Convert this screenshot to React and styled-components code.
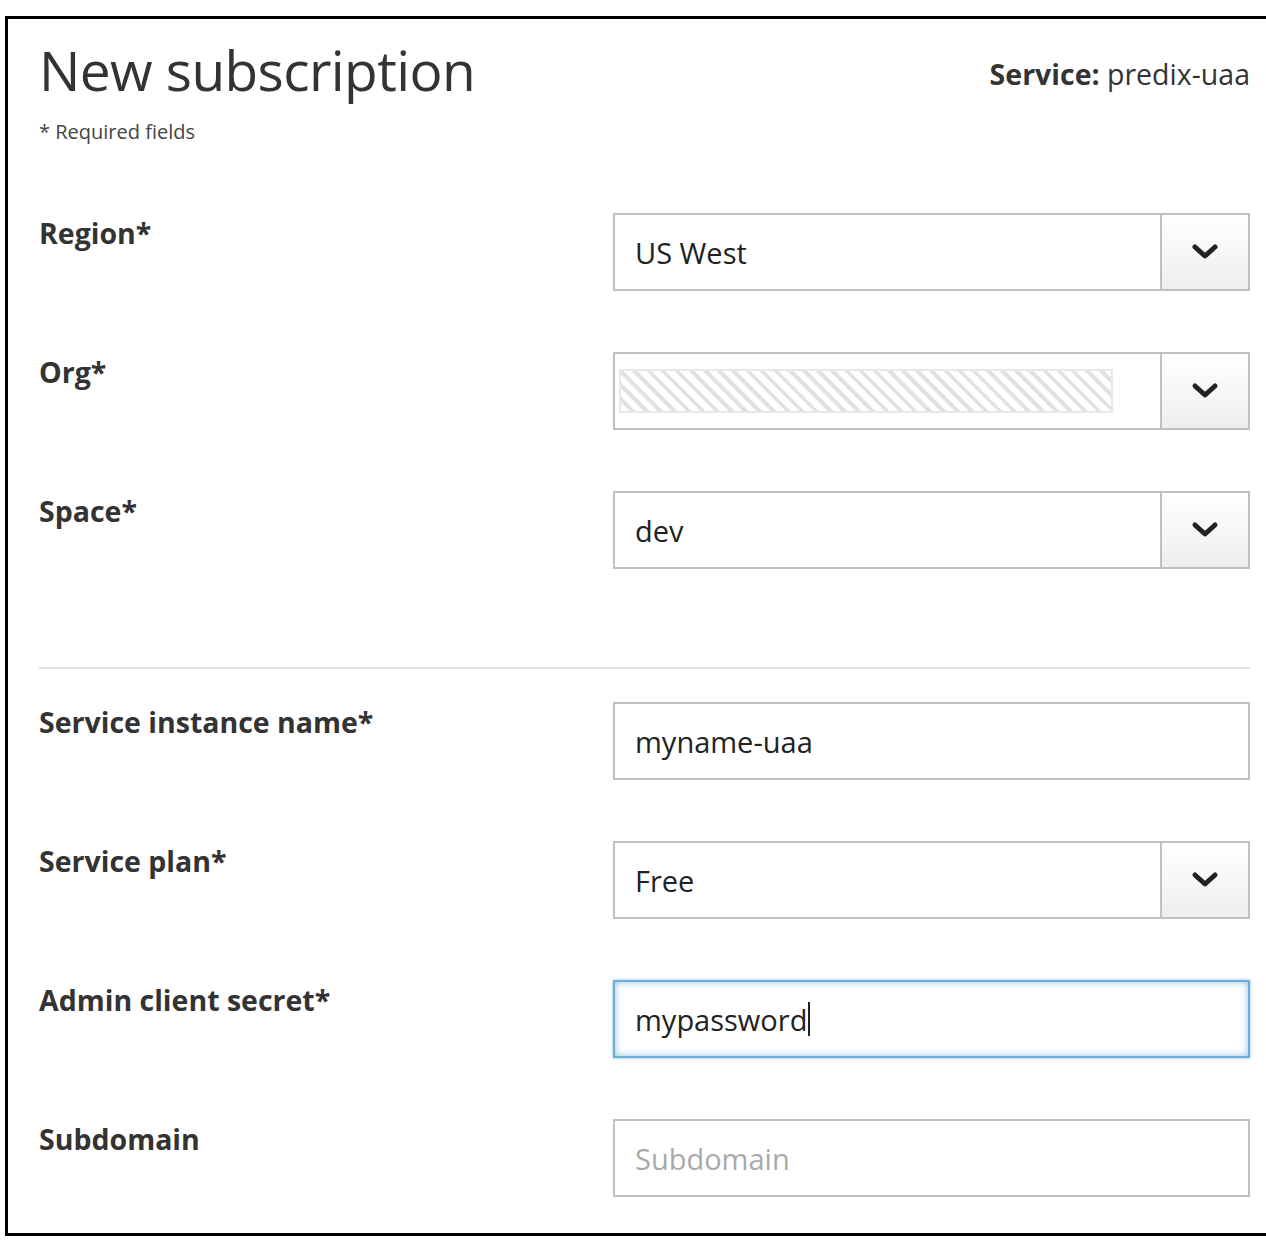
import styled, { createGlobalStyle } from 'styled-components';

const GlobalStyle = createGlobalStyle`
  html, body {
    margin: 0;
    padding: 0;
    background: #fff;
    overflow: hidden;
  }
  body {
    font-family: 'Open Sans', 'Noto Sans', sans-serif;
    color: #333;
  }
`

function Chevron() {
  return (
    <svg width="30" height="20" viewBox="0 0 30 20">
      <polyline points="5,5 15,14 25,5" fill="none" stroke="#222" strokeWidth="5" strokeLinecap="round" strokeLinejoin="round" />
    </svg>
  )
}

function SelectRow({ label, value, hatched }) {
  return (
    <Row>
      <Label>{label}</Label>
      <Field>
        <Value>{hatched ? <Hatch /> : value}</Value>
        <Toggle><Chevron /></Toggle>
      </Field>
    </Row>
  )
}

export default function App() {
  return (
    <>
      <GlobalStyle />
      <Frame>
        <Header>
          <div>
            <Title>New subscription</Title>
            <Required>* Required fields</Required>
          </div>
          <Service><b>Service:</b> predix-uaa</Service>
        </Header>

        <Group>
          <SelectRow label="Region*" value="US West" />
          <SelectRow label="Org*" hatched />
          <SelectRow label="Space*" value="dev" />
        </Group>

        <Divider />

        <Group>
          <Row>
            <Label>Service instance name*</Label>
            <Field><Value>myname-uaa</Value></Field>
          </Row>
          <SelectRow label="Service plan*" value="Free" />
          <Row>
            <Label>Admin client secret*</Label>
            <Field $focused><Value>mypassword<Caret /></Value></Field>
          </Row>
          <Row>
            <Label>Subdomain</Label>
            <Field><Value $placeholder>Subdomain</Value></Field>
          </Row>
        </Group>
      </Frame>
    </>
  )
}

const Frame = styled.div`
  margin: 16px 0 0 5px;
  border: 3px solid #000;
  border-right: none;
  height: 1220px;
  box-sizing: border-box;
  padding: 16px 16px 0 31px;
`

const Header = styled.div`
  display: flex;
  justify-content: space-between;
  align-items: flex-start;
`

const Title = styled.h1`
  margin: 0;
  font-size: 55px;
  font-weight: 400;
  line-height: 70px;
  letter-spacing: -0.6px;
  color: #333;
`

const Required = styled.div`
  font-size: 20px;
  line-height: 26px;
  margin-top: 14px;
  color: #444;
`

const Service = styled.div`
  font-size: 28.5px;
  line-height: 36px;
  margin-top: 21px;
  color: #333;
  b {
    font-weight: 700;
  }
`

const Group = styled.div`
  display: flex;
  flex-direction: column;
  gap: 61px;
  margin-top: 68px;
  &:last-child {
    margin-top: 33px;
  }
`

const Row = styled.div`
  display: grid;
  grid-template-columns: 574px 1fr;
  align-items: start;
`

const Label = styled.div`
  font-size: 28.5px;
  font-weight: 700;
  line-height: 38px;
  padding-top: 1px;
  color: #333;
`

const Field = styled.div`
  display: flex;
  height: 78px;
  box-sizing: border-box;
  border: 2px solid ${p => p.$focused ? '#69afd8' : '#c0c0c0'};
  box-shadow: ${p => p.$focused
    ? 'inset 0 0 7px rgba(70, 150, 200, 0.6), 0 0 3px rgba(70, 150, 200, 0.6)'
    : 'none'};
  background: #fff;
`

const Value = styled.div`
  flex: 1;
  display: flex;
  align-items: center;
  padding: 0 0 0 20px;
  font-size: 29px;
  color: ${p => p.$placeholder ? '#aaa' : '#222'};
`

const Caret = styled.span`
  display: inline-block;
  width: 2px;
  height: 34px;
  background: #222;
  margin-left: 1px;
`

const Hatch = styled.div`
  margin-left: -16px;
  width: 494px;
  height: 44px;
  box-sizing: border-box;
  border: 2px solid #e8e8e8;
  background: repeating-linear-gradient(
    45deg,
    #fff 0px,
    #fff 6px,
    #e2e2e2 6px,
    #e2e2e2 10px
  );
`

const Toggle = styled.div`
  width: 86px;
  display: flex;
  align-items: center;
  justify-content: center;
  border-left: 2px solid #c0c0c0;
  background: linear-gradient(#fff, #eeeeee);
`

const Divider = styled.hr`
  margin: 98px 0 0;
  border: none;
  border-top: 2px solid #e2e2e2;
`
